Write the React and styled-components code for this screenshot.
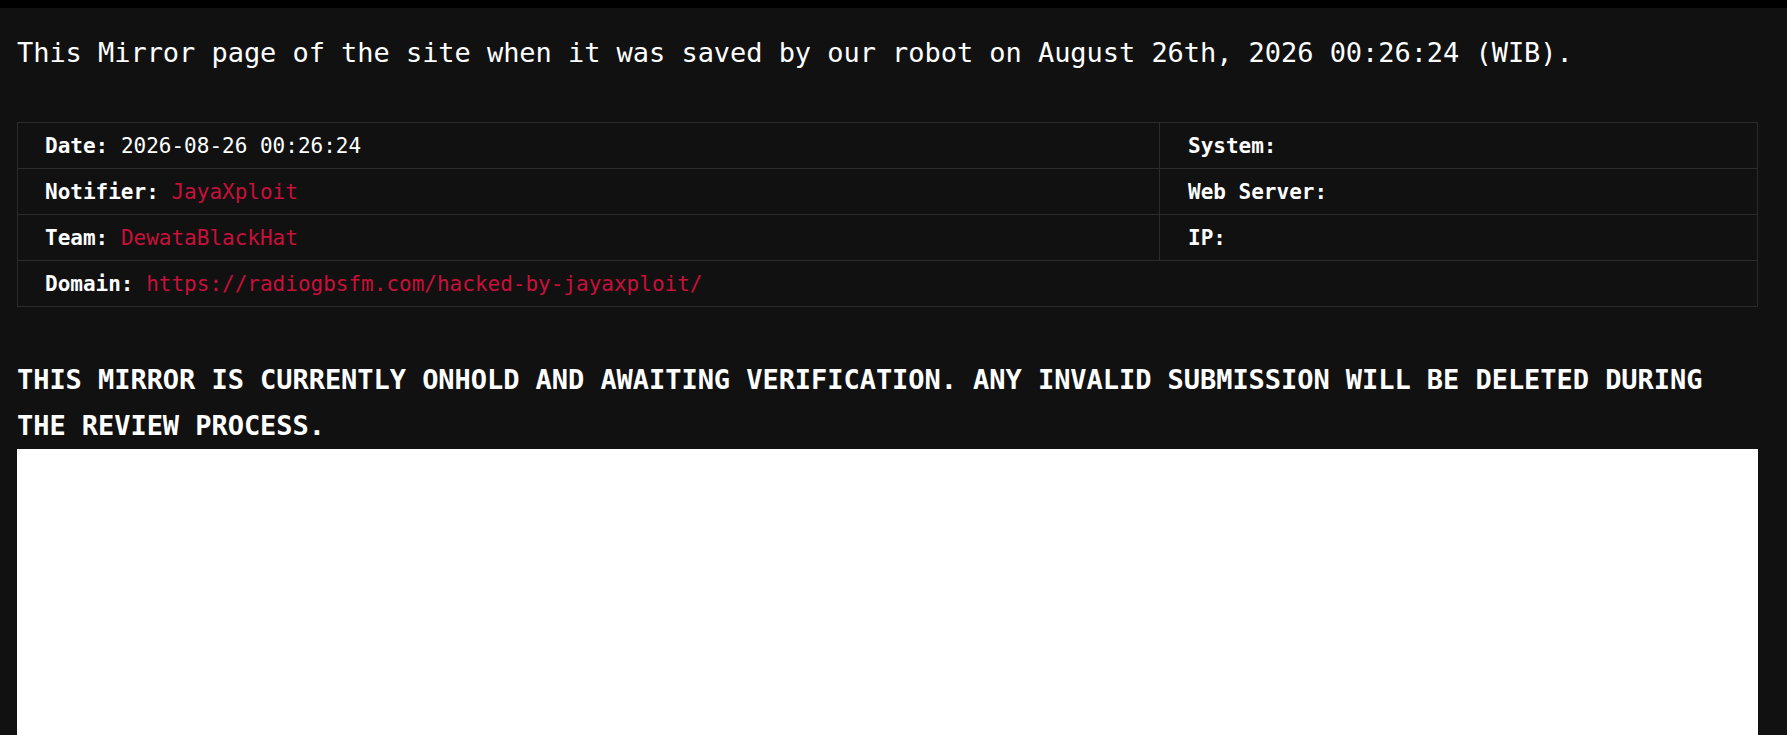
import React from 'react'
import styled, { createGlobalStyle } from 'styled-components';

const GlobalStyle = createGlobalStyle`
    html, body {
        margin:0;
        padding:0;
        background:#111111;
    }
    body {
        border-top:8px solid #000000;
        font-family:"DejaVu Sans Mono", "Liberation Mono", monospace;
        color:#ffffff;
        overflow:hidden;
    }
`;

const Page = styled.main`
    width:1741px;
    padding:0 17px;
`;

const Intro = styled.p`
    margin:0;
    padding-top:29px;
    font-size:27px;
    line-height:32px;
    letter-spacing:-0.05px;
`;

const InfoTable = styled.table`
    width:100%;
    margin-top:53px;
    border-collapse:collapse;
    border:1px solid #2b2b2b;
    font-size:21px;
`;

const Cell = styled.td`
    height:45px;
    padding:0 0 0 ${props=>props.right?'28px':'27px'};
    border:1px solid #2b2b2b;
    width:${props=>props.right?'auto':'1114px'};
    vertical-align:middle;
    white-space:nowrap;
`;

const Label = styled.b`
    font-weight:700;
`;

const Value = styled.span`
    color:${props=>props.red?'#c8103a':'#ffffff'};
`;

const Notice = styled.h2`
    margin:50px 0 0;
    font-size:27px;
    line-height:46px;
    font-weight:700;
    text-transform:uppercase;
    letter-spacing:-0.05px;
`;

const Frame = styled.div`
    height:300px;
    background:#ffffff;
`;

const ROWS = [
    {label:'Date',value:'2026-08-26 00:26:24',red:false,side:'System'},
    {label:'Notifier',value:'JayaXploit',red:true,side:'Web Server'},
    {label:'Team',value:'DewataBlackHat',red:true,side:'IP'}
]

const App = () => {
    return(
        <>
            <GlobalStyle/>
            <Page>
                <Intro>This Mirror page of the site when it was saved by our robot on August 26th, 2026 00:26:24 (WIB).</Intro>
                <InfoTable>
                    <tbody>
                        {ROWS.map(row=>(
                            <tr key={row.label}>
                                <Cell>
                                    <Label>{row.label}:</Label> <Value red={row.red}>{row.value}</Value>
                                </Cell>
                                <Cell right>
                                    <Label>{row.side}:</Label>
                                </Cell>
                            </tr>
                        ))}
                        <tr>
                            <Cell colSpan={2}>
                                <Label>Domain:</Label> <Value red>https://radiogbsfm.com/hacked-by-jayaxploit/</Value>
                            </Cell>
                        </tr>
                    </tbody>
                </InfoTable>
                <Notice>This mirror is currently onhold and awaiting verification. Any invalid submission will be deleted during the review process.</Notice>
                <Frame/>
            </Page>
        </>
    );
}

export default App;
